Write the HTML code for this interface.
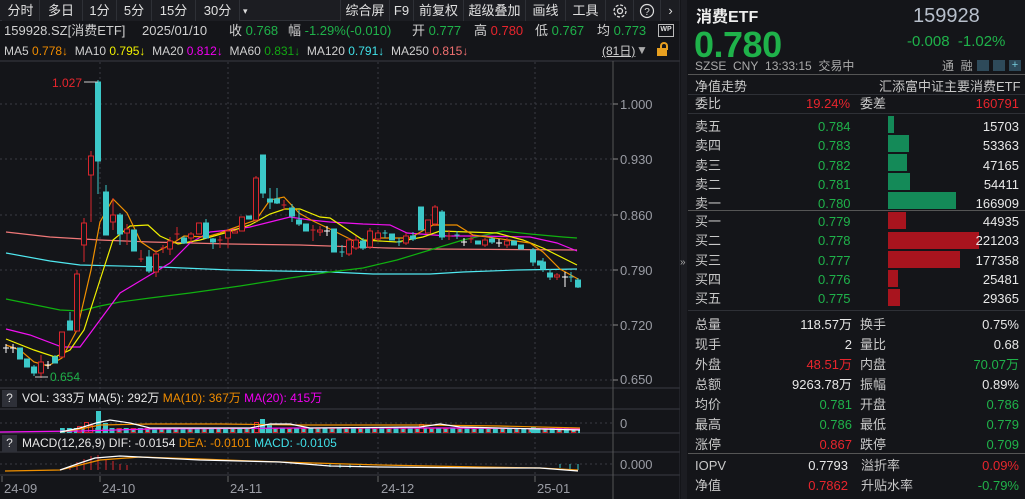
<!DOCTYPE html>
<html><head><meta charset="utf-8">
<style>
*{margin:0;padding:0;box-sizing:border-box}
body{width:1025px;height:499px;background:#141519;overflow:hidden;position:relative;font-family:"Liberation Sans","Noto Sans CJK SC",sans-serif;color:#d0d0d0;font-size:13px}
.a{position:absolute;white-space:nowrap;line-height:16px}
.g{color:#1fb24a}.r{color:#e8252d}.o{color:#f08c00}.y{color:#f0f000}.m{color:#f000f0}.gg{color:#13a813}.cy{color:#40e0e8}.s{color:#f07070}
.tb{position:absolute;top:0;height:21px;border-right:1px solid #2e3036;text-align:center;line-height:21px;font-size:13px;color:#e0e0e0;background:#1c1d22}
.rp .a{font-size:13px}
.lab{color:#c8c8c8}
</style></head><body>
<div style="position:absolute;left:0;top:0;width:680px;height:21px;background:#1c1d22;border-bottom:1px solid #2e3036"></div>
<div class="tb" style="left:2px;width:38px">分时</div>
<div class="tb" style="left:40px;width:43px">多日</div>
<div class="tb" style="left:83px;width:34px">1分</div>
<div class="tb" style="left:117px;width:35px">5分</div>
<div class="tb" style="left:152px;width:44px">15分</div>
<div class="tb" style="left:196px;width:44px">30分</div>
<div class="a" style="left:243px;top:3px;font-size:9px;color:#ddd">▾</div>
<div class="tb" style="left:340px;width:50px;border-left:1px solid #2e3036">综合屏</div>
<div class="tb" style="left:390px;width:24px">F9</div>
<div class="tb" style="left:414px;width:50px">前复权</div>
<div class="tb" style="left:464px;width:62px">超级叠加</div>
<div class="tb" style="left:526px;width:40px">画线</div>
<div class="tb" style="left:566px;width:40px">工具</div>
<div class="tb" style="left:606px;width:28px"><svg width="16" height="16" viewBox="0 0 16 16" style="margin-top:3px"><circle cx="8" cy="8" r="2.5" fill="none" stroke="#ddd" stroke-width="1.3"/><circle cx="8" cy="8" r="6" fill="none" stroke="#ddd" stroke-width="1.3" stroke-dasharray="3 1.7"/></svg></div>
<div class="tb" style="left:634px;width:27px"><svg width="16" height="16" viewBox="0 0 16 16" style="margin-top:3px"><circle cx="8" cy="8" r="6.5" fill="none" stroke="#ddd" stroke-width="1.2"/><text x="8" y="12" font-size="10" fill="#ddd" text-anchor="middle" font-family="Liberation Sans">?</text></svg></div>
<div class="tb" style="left:661px;width:19px;border-right:none">›</div>
<div class="a" style="left:4px;top:23px">159928.SZ[消费ETF]</div>
<div class="a" style="left:142px;top:23px">2025/01/10</div>
<div class="a" style="left:229px;top:23px">收 <span class="g">0.768</span></div>
<div class="a" style="left:288px;top:23px">幅 <span class="g">-1.29%(-0.010)</span></div>
<div class="a" style="left:412px;top:23px">开 <span class="g">0.777</span></div>
<div class="a" style="left:474px;top:23px">高 <span class="r">0.780</span></div>
<div class="a" style="left:535px;top:23px">低 <span class="g">0.767</span></div>
<div class="a" style="left:597px;top:23px">均 <span class="g">0.773</span></div>
<div class="a" style="left:658px;top:24px;width:16px;height:13px;border:1px solid #bbb;font-size:7px;color:#ddd;text-align:center;line-height:10px;font-weight:bold">WP</div>
<div class="a" style="left:4px;top:43px;font-size:12px">MA5 <span class="o">0.778↓</span>&nbsp; MA10 <span class="y">0.795↓</span>&nbsp; MA20 <span class="m">0.812↓</span>&nbsp; MA60 <span class="gg">0.831↓</span>&nbsp; MA120 <span class="cy">0.791↓</span>&nbsp; MA250 <span class="s">0.815↓</span></div>
<div class="a" style="left:602px;top:43px;font-size:12px;text-decoration:underline">(81日)</div>
<div class="a" style="left:636px;top:42px;font-size:12px;color:#aaa">▼</div>
<div class="a" style="left:657px;top:48px;width:10px;height:8px;background:#e8a020"></div>
<div class="a" style="left:660px;top:42px;width:8px;height:8px;border:2px solid #e8a020;border-bottom:none;border-radius:4px 4px 0 0"></div>

<svg class="a" style="left:0;top:0" width="680" height="499">
<g stroke="#3a3c44" stroke-dasharray="2 3" stroke-width="1">
<line x1="0" y1="104" x2="612" y2="104"/><line x1="0" y1="159" x2="612" y2="159"/><line x1="0" y1="215" x2="612" y2="215"/><line x1="0" y1="270" x2="612" y2="270"/><line x1="0" y1="325" x2="612" y2="325"/><line x1="0" y1="380" x2="612" y2="380"/>
<line x1="100" y1="62" x2="100" y2="476"/><line x1="228" y1="62" x2="228" y2="476"/><line x1="378" y1="62" x2="378" y2="476"/><line x1="535" y1="62" x2="535" y2="476"/>
<line x1="0" y1="423" x2="612" y2="423"/><line x1="0" y1="464" x2="612" y2="464"/>
</g>
<g stroke="#3a3c44"><line x1="0" y1="61" x2="680" y2="61"/><line x1="0" y1="388" x2="680" y2="388"/><line x1="0" y1="409" x2="680" y2="409"/><line x1="0" y1="433" x2="680" y2="433"/><line x1="0" y1="452" x2="680" y2="452"/><line x1="0" y1="475" x2="680" y2="475"/>
<line x1="613" y1="61" x2="613" y2="499" stroke="#555"/><line x1="680" y1="0" x2="680" y2="499" stroke="#2e3036"/></g>
<g stroke="#888"><line x1="613" y1="104" x2="618" y2="104"/><line x1="613" y1="159" x2="618" y2="159"/><line x1="613" y1="215" x2="618" y2="215"/><line x1="613" y1="270" x2="618" y2="270"/><line x1="613" y1="325" x2="618" y2="325"/><line x1="613" y1="380" x2="618" y2="380"/></g>
<g font-family="Liberation Sans" font-size="13" fill="#9a9ca4">
<text x="620" y="109">1.000</text><text x="620" y="164">0.930</text><text x="620" y="220">0.860</text><text x="620" y="275">0.790</text><text x="620" y="330">0.720</text><text x="620" y="384">0.650</text>
<text x="620" y="428">0</text><text x="620" y="469">0.000</text>
<text x="4" y="493">24-09</text><text x="102" y="493">24-10</text><text x="230" y="493">24-11</text><text x="381" y="493">24-12</text><text x="537" y="493">25-01</text>
</g>
<g stroke="#666"><line x1="2" y1="476" x2="2" y2="482"/><line x1="100" y1="476" x2="100" y2="482"/><line x1="228" y1="476" x2="228" y2="482"/><line x1="378" y1="476" x2="378" y2="482"/><line x1="535" y1="476" x2="535" y2="482"/></g>
<g fill="none" stroke-width="1.2">
<polyline stroke="#f07878" points="6,232 50,237 100,240 150,242 230,244 300,245 387,248 430,249 577,250"/>
<polyline stroke="#50e8f0" points="6,253 50,261 80,265 160,267 230,270 330,272 373,274 430,274 463,272 517,270 577,269"/>
<polyline stroke="#10b010" points="6,299 60,310 80,311 100,306 120,302 150,298 190,293 240,286 290,278 330,272 363,268 397,260 430,250 463,240 503,231 530,234 563,237 577,238"/>
<polyline stroke="#f010f0" points="6,329 30,335 62,347 80,347 100,320 120,293 150,275 170,263 190,243 210,232 230,230 250,227 270,222 290,217 310,220 330,222 363,224 390,225 407,233 447,236 477,236 530,237 557,243 577,251"/>
<polyline stroke="#f0f000" points="6,339 34,350 55,357 70,350 84,330 100,280 113,240 130,226 148,225 160,236 178,244 200,240 228,232 250,225 270,214 285,209 300,209 320,217 330,218 363,240 397,242 423,237 440,231 497,233 523,240 543,248 577,265"/>
<polyline stroke="#f09000" points="6,345 20,350 34,362 48,366 62,358 77,330 91,270 100,222 113,199 127,213 141,242 156,252 170,245 184,236 206,237 220,233 242,225 256,220 270,200 284,197 299,213 313,221 330,229 358,243 380,238 410,238 433,225 457,225 473,235 530,243 543,252 560,269 578,279"/>
</g>
<g stroke="#3cc8c8" fill="#3cc8c8">
<rect x="17.5" y="348" width="5" height="11"/><rect x="24.5" y="359" width="5" height="8"/><line x1="34" y1="365" x2="34" y2="376"/><rect x="31.5" y="367" width="5" height="6"/>
<line x1="55" y1="355" x2="55" y2="363"/><rect x="52.5" y="357" width="5" height="6"/>
<line x1="70" y1="312" x2="70" y2="330"/><rect x="67.5" y="321" width="5" height="9"/>
<line x1="98" y1="80" x2="98" y2="194"/><rect x="95.5" y="82" width="5" height="79"/>
<line x1="106" y1="185" x2="106" y2="235"/><rect x="103.5" y="192" width="5" height="43"/>
<line x1="120" y1="213" x2="120" y2="245"/><rect x="117.5" y="215" width="5" height="19"/>
<rect x="131.5" y="230" width="5" height="21"/>
<line x1="149" y1="250" x2="149" y2="273"/><rect x="146.5" y="257" width="5" height="14"/>
<line x1="184" y1="236" x2="184" y2="244"/><rect x="181.5" y="238" width="5" height="5"/>
<line x1="206" y1="219" x2="206" y2="238"/><rect x="203.5" y="223" width="5" height="15"/>
<line x1="213" y1="238" x2="213" y2="249"/><rect x="210.5" y="239" width="5" height="3"/>
<rect x="246.5" y="216" width="5" height="3"/>
<line x1="263" y1="155" x2="263" y2="198"/><rect x="260.5" y="155" width="5" height="38"/>
<line x1="270" y1="188" x2="270" y2="209"/><rect x="267.5" y="199" width="5" height="3"/>
<line x1="277" y1="188" x2="277" y2="204"/><rect x="274.5" y="199" width="5" height="4"/>
<line x1="292" y1="204" x2="292" y2="222"/><rect x="289.5" y="208" width="5" height="8"/>
<line x1="299" y1="210" x2="299" y2="226"/><rect x="296.5" y="220" width="5" height="4"/>
<rect x="303.5" y="224" width="5" height="7"/>
<rect x="331.5" y="229" width="5" height="23"/>
<line x1="342" y1="245" x2="342" y2="257"/><line x1="339.5" y1="252" x2="344.5" y2="252"/>
<line x1="363" y1="238" x2="363" y2="250"/><rect x="360.5" y="241" width="5" height="7"/>
<line x1="385" y1="230" x2="385" y2="238"/><line x1="382.5" y1="233" x2="387.5" y2="233"/>
<rect x="389.5" y="234" width="5" height="6"/>
<line x1="399" y1="238" x2="399" y2="246"/><line x1="396.5" y1="242" x2="401.5" y2="242"/>
<line x1="413" y1="232" x2="413" y2="241"/><rect x="410.5" y="236" width="5" height="3"/>
<rect x="418.5" y="207" width="5" height="23"/>
<line x1="442" y1="210" x2="442" y2="240"/><rect x="439.5" y="212" width="5" height="25"/>
<line x1="457" y1="231" x2="457" y2="239"/><line x1="454.5" y1="235" x2="459.5" y2="235"/>
<rect x="475.5" y="241" width="5" height="3"/>
<line x1="492" y1="237" x2="492" y2="244"/><rect x="489.5" y="239" width="5" height="3"/>
<rect x="511.5" y="241" width="5" height="4"/>
<rect x="518.5" y="245" width="5" height="4"/>
<line x1="533" y1="248" x2="533" y2="266"/><rect x="530.5" y="250" width="5" height="12"/>
<rect x="537.5" y="261" width="5" height="4"/>
<line x1="543" y1="258" x2="543" y2="272"/><rect x="540.5" y="262" width="5" height="7"/>
<line x1="550" y1="269" x2="550" y2="280"/><rect x="547.5" y="273" width="5" height="4"/>
<line x1="571" y1="272" x2="571" y2="282"/><line x1="568.5" y1="277" x2="573.5" y2="277"/>
<line x1="578" y1="278" x2="578" y2="288"/><rect x="575.5" y="280" width="5" height="7"/>
</g>
<g stroke="#d8262d" fill="#141519">
<line x1="41" y1="355" x2="41" y2="378"/><rect x="38.5" y="362" width="5" height="11"/>
<rect x="59.5" y="332" width="5" height="25"/>
<line x1="77" y1="270" x2="77" y2="331"/><rect x="74.5" y="274" width="5" height="57"/>
<line x1="84" y1="218" x2="84" y2="262"/><rect x="81.5" y="223" width="5" height="22"/>
<line x1="91" y1="151" x2="91" y2="222"/><rect x="88.5" y="156" width="5" height="19"/>
<line x1="113" y1="198" x2="113" y2="230"/><rect x="110.5" y="215" width="5" height="7"/>
<line x1="127" y1="224" x2="127" y2="245"/><rect x="124.5" y="229" width="5" height="4"/>
<line x1="141" y1="250" x2="141" y2="262"/><line x1="138.5" y1="259" x2="143.5" y2="259"/>
<line x1="156" y1="250" x2="156" y2="277"/><rect x="153.5" y="254" width="5" height="18"/>
<line x1="163" y1="245" x2="163" y2="253"/><line x1="160.5" y1="248" x2="165.5" y2="248"/>
<line x1="170" y1="237" x2="170" y2="255"/><rect x="167.5" y="241" width="5" height="8"/>
<line x1="177" y1="227" x2="177" y2="240"/><line x1="174.5" y1="234" x2="179.5" y2="234"/>
<line x1="191" y1="232" x2="191" y2="242"/><rect x="188.5" y="234" width="5" height="4"/>
<rect x="196.5" y="223" width="5" height="11"/>
<line x1="220" y1="236" x2="220" y2="248"/><line x1="217.5" y1="240" x2="222.5" y2="240"/>
<line x1="228" y1="229" x2="228" y2="248"/><rect x="225.5" y="231" width="5" height="7"/>
<rect x="232.5" y="231" width="5" height="2"/>
<rect x="239.5" y="217" width="5" height="14"/>
<line x1="256" y1="176" x2="256" y2="222"/><rect x="253.5" y="178" width="5" height="42"/>
<line x1="284" y1="200" x2="284" y2="210"/><line x1="281.5" y1="205" x2="286.5" y2="205"/>
<line x1="313" y1="225" x2="313" y2="241"/><line x1="310.5" y1="230" x2="315.5" y2="230"/>
<line x1="320" y1="226" x2="320" y2="236"/><rect x="317.5" y="230" width="5" height="2"/>
<line x1="349" y1="238" x2="349" y2="256"/><rect x="346.5" y="240" width="5" height="14"/>
<line x1="356" y1="236" x2="356" y2="250"/><rect x="353.5" y="240" width="5" height="8"/>
<line x1="370" y1="228" x2="370" y2="249"/><rect x="367.5" y="231" width="5" height="16"/>
<line x1="378" y1="230" x2="378" y2="241"/><rect x="375.5" y="233" width="5" height="6"/>
<line x1="406" y1="233" x2="406" y2="245"/><rect x="403.5" y="236" width="5" height="7"/>
<rect x="425.5" y="220" width="5" height="13"/>
<line x1="435" y1="205" x2="435" y2="226"/><rect x="432.5" y="207" width="5" height="17"/>
<line x1="449" y1="230" x2="449" y2="240"/><line x1="446.5" y1="236" x2="451.5" y2="236"/>
<line x1="471" y1="235" x2="471" y2="243"/><line x1="468.5" y1="239" x2="473.5" y2="239"/>
<line x1="485" y1="238" x2="485" y2="247"/><rect x="482.5" y="240" width="5" height="5"/>
<line x1="507" y1="238" x2="507" y2="248"/><rect x="504.5" y="241" width="5" height="4"/>
<line x1="557" y1="273" x2="557" y2="280"/><rect x="554.5" y="275" width="5" height="2"/>
</g>
<g stroke="#fff">
<line x1="6" y1="344" x2="6" y2="353"/><line x1="3" y1="348" x2="9" y2="348"/>
<line x1="13" y1="344" x2="13" y2="353"/><line x1="10" y1="348" x2="16" y2="348"/>
<line x1="48" y1="361" x2="48" y2="369"/><line x1="45" y1="365" x2="51" y2="365"/>
<line x1="327" y1="226" x2="327" y2="236"/><line x1="324" y1="231" x2="330" y2="231"/>
<line x1="464" y1="238" x2="464" y2="246"/><line x1="461" y1="242" x2="467" y2="242"/>
<line x1="499" y1="239" x2="499" y2="247"/><line x1="496" y1="243" x2="502" y2="243"/>
<line x1="565" y1="272" x2="565" y2="287"/><line x1="562" y1="277" x2="568" y2="277"/>
</g>
<line x1="84" y1="82" x2="98" y2="82" stroke="#ccc"/><text x="52" y="87" fill="#e8252d" font-size="12" font-family="Liberation Sans">1.027</text>
<line x1="35" y1="377" x2="48" y2="377" stroke="#ccc"/><text x="50" y="381" fill="#1fb24a" font-size="12" font-family="Liberation Sans">0.654</text>
<defs><pattern id="vp" x="3" y="409" width="7.1" height="24" patternUnits="userSpaceOnUse"><rect x="0" y="19" width="5" height="5" fill="#3cc8c8"/></pattern>
<pattern id="vr" x="3" y="409" width="14.2" height="24" patternUnits="userSpaceOnUse"><rect x="0.5" y="19.5" width="4" height="4" fill="none" stroke="#d8262d"/></pattern></defs>
<rect x="60" y="409" width="520" height="24" fill="url(#vp)"/>
<rect x="100" y="409" width="480" height="24" fill="url(#vr)"/>
<g fill="#3cc8c8"><rect x="96" y="411" width="5" height="22"/><rect x="103" y="423" width="5" height="10"/><rect x="260" y="419" width="5" height="14"/><rect x="267" y="425" width="5" height="8"/><rect x="531" y="427" width="5" height="6"/></g>
<g fill="#141519" stroke="#d8262d"><rect x="77.5" y="426.5" width="4" height="6"/><rect x="84.5" y="422.5" width="4" height="10"/><rect x="88.5" y="425.5" width="4" height="7"/><rect x="254.5" y="422.5" width="4" height="10"/><rect x="419.5" y="424.5" width="4" height="8"/></g>
<g fill="none" stroke-width="1.2">
<polyline stroke="#f010f0" points="0,432 80,431 150,429 300,428 450,428 580,429"/>
<polyline stroke="#f09000" points="60,432 80,429 100,425 150,424 220,424 300,425 420,425 500,426 580,428"/>
<polyline stroke="#fff" points="60,432 80,428 96,423 110,420 130,423 150,428 250,428 270,424 290,424 310,428 420,427 440,424 460,427 580,430"/>
</g>
<g stroke="#d8262d"><line x1="70" y1="470" x2="70" y2="466"/><line x1="77" y1="470" x2="77" y2="462"/><line x1="84" y1="470" x2="84" y2="459"/><line x1="91" y1="470" x2="91" y2="456"/><line x1="98" y1="470" x2="98" y2="455"/><line x1="106" y1="470" x2="106" y2="459"/><line x1="113" y1="470" x2="113" y2="461"/><line x1="120" y1="470" x2="120" y2="464"/><line x1="127" y1="470" x2="127" y2="465"/></g>
<g stroke="#3cc8c8"><line x1="330" y1="464" x2="330" y2="467"/><line x1="340" y1="464" x2="340" y2="468"/><line x1="350" y1="464" x2="350" y2="468"/><line x1="360" y1="464" x2="360" y2="467"/><line x1="560" y1="464" x2="560" y2="468"/><line x1="570" y1="464" x2="570" y2="469"/><line x1="578" y1="464" x2="578" y2="470"/></g>
<g fill="none" stroke-width="1.2">
<polyline stroke="#f09000" points="5,471 60,470 80,465 100,460 140,457 200,459 280,462 380,465 480,467 540,468 578,470"/>
<polyline stroke="#fff" points="60,470 80,463 95,458 120,456 140,457 200,460 280,462 330,466 380,467 480,468 540,468 578,471"/>
</g>
</svg>
<div class="a" style="left:2px;top:390px;width:15px;height:17px;background:#2e3038;color:#ddd;text-align:center;font-size:12px;line-height:17px">?</div>
<div class="a" style="left:22px;top:390px;font-size:12px;color:#e8e8e8">VOL: 333万 MA(5): 292万 <span class="o">MA(10): 367万</span> <span class="m">MA(20): 415万</span></div>
<div class="a" style="left:2px;top:435px;width:15px;height:17px;background:#2e3038;color:#ddd;text-align:center;font-size:12px;line-height:17px">?</div>
<div class="a" style="left:22px;top:435px;font-size:12px;color:#e8e8e8">MACD(12,26,9) DIF: -0.0154 <span class="o">DEA: -0.0101</span> <span class="cy">MACD: -0.0105</span></div>

<div class="a" style="left:681px;top:0;width:6px;height:499px;background:#1c1d22"></div>
<div class="a" style="left:680px;top:255px;font-size:10px;color:#aaa">»</div>
<div class="rp">
<div class="a" style="left:696px;top:8px;font-size:16px;font-weight:bold;color:#eee;line-height:20px">消费ETF</div>
<div class="a" style="left:913px;top:5px;font-size:20px;color:#b8c0cc;line-height:22px">159928</div>
<div class="a g" style="left:694px;top:25px;font-size:36px;font-weight:bold;letter-spacing:-0.5px;line-height:40px">0.780</div>
<div class="a g" style="left:907px;top:33px;font-size:15px;line-height:18px">-0.008&nbsp; -1.02%</div>
<div class="a" style="left:695px;top:58px;font-size:12px;color:#aaa">SZSE&nbsp; CNY&nbsp; 13:33:15&nbsp; 交易中</div>
<div class="a" style="left:942px;top:58px;font-size:12px;color:#aaa">通&nbsp; 融</div>
<div class="a" style="left:977px;top:60px;width:12px;height:11px;background:#2e4a5a"></div>
<div class="a" style="left:993px;top:60px;width:12px;height:11px;background:#2e4a5a"></div>
<div class="a" style="left:1009px;top:60px;width:12px;height:11px;background:#2e4a5a;color:#7cd;font-size:11px;line-height:10px;text-align:center">+</div>
<div class="a" style="left:688px;top:74px;width:337px;height:1px;background:#555"></div>
<div class="a lab" style="left:695px;top:79px">净值走势</div>
<div class="a lab" style="left:879px;top:79px">汇添富中证主要消费ETF</div>
<div class="a" style="left:688px;top:94px;width:337px;height:1px;background:#2e3036"></div>
<div class="a lab" style="left:695px;top:96px">委比</div>
<div class="a r" style="left:806px;top:96px">19.24%</div>
<div class="a lab" style="left:860px;top:96px">委差</div>
<div class="a r" style="left:962px;top:96px;width:57px;text-align:right">160791</div>
<div class="a" style="left:688px;top:113px;width:337px;height:1px;background:#2e3036"></div>
<div class="a" style="left:688px;top:210px;width:337px;height:1px;background:#555"></div>
<div class="a" style="left:688px;top:310px;width:337px;height:1px;background:#2e3036"></div>
<div class="a" style="left:688px;top:453px;width:337px;height:1px;background:#555"></div>
</div>
<svg class="a" style="left:680px;top:110px" width="345" height="200">
<g fill="#148a58"><rect x="208" y="6" width="6" height="17"/><rect x="208" y="25" width="21" height="17"/><rect x="208" y="44" width="19" height="17"/><rect x="208" y="63" width="22" height="17"/><rect x="208" y="82" width="68" height="17"/></g>
<g fill="#a8141e"><rect x="208" y="102" width="18" height="17"/><rect x="208" y="122" width="91" height="17"/><rect x="208" y="141" width="72" height="17"/><rect x="208" y="160" width="10" height="17"/><rect x="208" y="179" width="12" height="17"/></g>
</svg>
<div class="a" style="left:695px;top:117px;font-size:13px;line-height:19.3px;color:#c8c8c8">卖五<br>卖四<br>卖三<br>卖二<br>卖一</div>
<div class="a g" style="left:818px;top:117px;font-size:13px;line-height:19.3px">0.784<br>0.783<br>0.782<br>0.781<br>0.780</div>
<div class="a" style="left:950px;top:117px;width:69px;text-align:right;font-size:13px;line-height:19.3px;color:#e8e8e8">15703<br>53363<br>47165<br>54411<br>166909</div>
<div class="a" style="left:695px;top:212px;font-size:13px;line-height:19.3px;color:#c8c8c8">买一<br>买二<br>买三<br>买四<br>买五</div>
<div class="a g" style="left:818px;top:212px;font-size:13px;line-height:19.3px">0.779<br>0.778<br>0.777<br>0.776<br>0.775</div>
<div class="a" style="left:950px;top:212px;width:69px;text-align:right;font-size:13px;line-height:19.3px;color:#e8e8e8">44935<br>221203<br>177358<br>25481<br>29365</div>
<div class="a" style="left:695px;top:315px;font-size:13px;line-height:20px;color:#c8c8c8">总量<br>现手<br>外盘<br>总额<br>均价<br>最高<br>涨停</div>
<div class="a" style="left:760px;top:315px;width:92px;text-align:right;font-size:13px;line-height:20px;color:#e8e8e8">118.57万<br>2<br><span class="r">48.51万</span><br>9263.78万<br><span class="g">0.781</span><br><span class="g">0.786</span><br><span class="r">0.867</span></div>
<div class="a" style="left:860px;top:315px;font-size:13px;line-height:20px;color:#c8c8c8">换手<br>量比<br>内盘<br>振幅<br>开盘<br>最低<br>跌停</div>
<div class="a" style="left:930px;top:315px;width:89px;text-align:right;font-size:13px;line-height:20px;color:#e8e8e8">0.75%<br>0.68<br><span class="g">70.07万</span><br>0.89%<br><span class="g">0.786</span><br><span class="g">0.779</span><br><span class="g">0.709</span></div>
<div class="a" style="left:695px;top:456px;font-size:13px;line-height:20px;color:#c8c8c8">IOPV<br>净值</div>
<div class="a" style="left:760px;top:456px;width:88px;text-align:right;font-size:13px;line-height:20px;color:#e8e8e8">0.7793<br><span class="r">0.7862</span></div>
<div class="a" style="left:861px;top:456px;font-size:13px;line-height:20px;color:#c8c8c8">溢折率<br>升贴水率</div>
<div class="a" style="left:930px;top:456px;width:89px;text-align:right;font-size:13px;line-height:20px"><span class="r">0.09%</span><br><span class="g">-0.79%</span></div>
</body></html>
